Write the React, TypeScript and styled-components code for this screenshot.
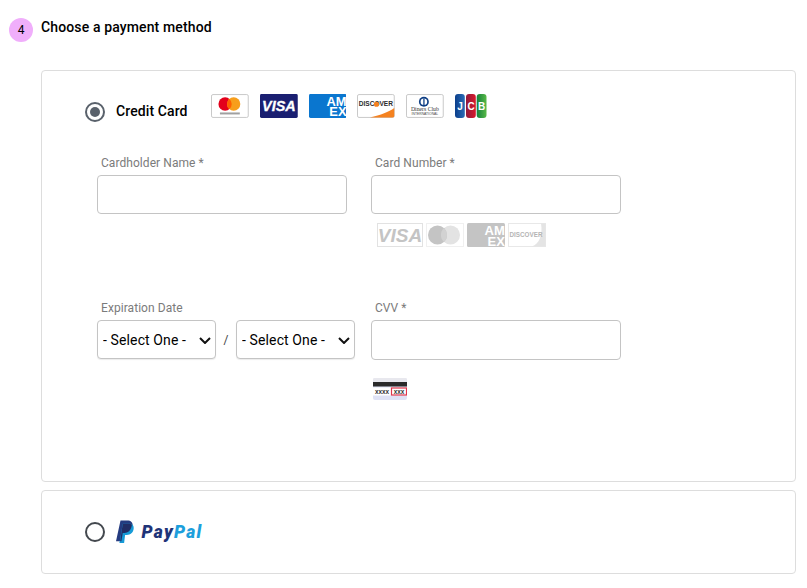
import styled, { createGlobalStyle } from "styled-components"

const GlobalStyle = createGlobalStyle`
  html, body {
    margin: 0;
    padding: 0;
    background: #fff;
    font-family: Roboto, "Liberation Sans", sans-serif;
    color: #000;
  }
`

const Page = styled.div`
  width: 807px;
  height: 588px;
  overflow: hidden;
  padding: 18px 11px 0 9px;
  box-sizing: border-box;
`

const Heading = styled.div`
  display: flex;
  align-items: flex-start;
  gap: 8px;
  height: 52px;
`

const StepBadge = styled.span`
  width: 24px;
  height: 24px;
  border-radius: 50%;
  background: #f0aefb;
  display: flex;
  align-items: center;
  justify-content: center;
  font-size: 12px;
`

const Title = styled.h2`
  margin: 1px 0 0;
  font-size: 14px;
  line-height: 16px;
  font-weight: 500;
  letter-spacing: 0.13px;
`

const Panel = styled.section<{ $height: number }>`
  margin-left: 32px;
  margin-bottom: 8px;
  height: ${(p) => p.$height}px;
  box-sizing: border-box;
  border: 1px solid #ddd;
  border-radius: 4px;
  padding-left: 43px;
`

const CreditRow = styled.div`
  display: flex;
  align-items: flex-start;
  gap: 11px;
  padding-top: 23px;
`

const PaypalRow = styled.div`
  display: flex;
  align-items: center;
  gap: 11px;
  height: 82px;
`

const Radio = styled.input.attrs({ type: "radio" })`
  appearance: none;
  margin: 0;
  width: 20px;
  height: 20px;
  box-sizing: border-box;
  border: 2px solid #43484e;
  border-radius: 50%;
  background: #fff;
  display: flex;
  align-items: center;
  justify-content: center;
  flex: none;

  &:checked {
    border-color: #59616b;
    border-width: 2.5px;
  }

  &:checked::before {
    content: "";
    width: 10px;
    height: 10px;
    border-radius: 50%;
    background: #59616b;
  }
`

const CreditRadio = styled(Radio)`
  margin-top: 8px;
`

const MethodName = styled.label`
  margin-top: 9px;
  margin-right: 13px;
  width: 71px;
  font-size: 14px;
  font-weight: 500;
  line-height: 16px;
  letter-spacing: 0.1px;
  white-space: nowrap;
`

const LogoRow = styled.div`
  display: flex;
  gap: 11px;

  svg {
    flex: none;
    width: 37.75px;
    height: 24px;
  }

  svg:last-child {
    width: 32px;
  }
`

const FormGrid = styled.div`
  display: grid;
  grid-template-columns: 250px 250px;
  column-gap: 24px;
  margin: 33px 0 0 12px;
`

const Field = styled.div`
  height: 145px;
`

const Label = styled.label`
  display: block;
  padding: 1px 0 0 4px;
  margin-bottom: 5px;
  font-size: 12px;
  line-height: 14px;
  letter-spacing: 0.06px;
  color: #7b7b7b;
`

const TextInput = styled.input<{ $tall?: boolean }>`
  display: block;
  width: 100%;
  height: ${(p) => (p.$tall ? 40 : 39)}px;
  box-sizing: border-box;
  border: 1px solid #c4c4c4;
  border-radius: 4px;
  background: #fff;
`

const SelectRow = styled.div`
  display: flex;
  align-items: center;
  width: 258px;
`

const SelectWrap = styled.div`
  position: relative;
  width: 119px;
  height: 39px;

  svg {
    position: absolute;
    top: 17px;
    right: 5px;
    pointer-events: none;
  }
`

const DateSelect = styled.select`
  appearance: none;
  display: block;
  width: 100%;
  height: 100%;
  box-sizing: border-box;
  border: 1px solid #c4c4c4;
  border-radius: 4px;
  background: #fff;
  color: #000;
  font-family: Roboto, "Liberation Sans", sans-serif;
  font-size: 14px;
  letter-spacing: 0.12px;
  padding: 0 0 0 5px;
  box-shadow: 0 1px 1px rgba(0, 0, 0, 0.08);
`

const Slash = styled.span`
  width: 20px;
  text-align: center;
  font-size: 12px;
  color: #444;
`

const GreyCards = styled.div`
  display: flex;
  align-items: center;
  gap: 3px;
  margin: 9px 0 0 6px;
`

const CvvHint = styled.div`
  margin: 18px 0 0 2px;
  line-height: 0;
`

const LogoFont = "'Liberation Sans', Arial, sans-serif"

const Mastercard = () => (
  <svg viewBox="0 0 38 24">
    <rect x="0.5" y="0.5" width="37" height="23" rx="1.5" fill="#fff" stroke="#c9c9c9" />
    <circle cx="14.2" cy="10" r="6.7" fill="#e3001b" />
    <circle cx="22.8" cy="10" r="6.7" fill="#f79e1b" />
    <path d="M18.500 4.900a6.700 6.700 0 0 1 0 10.200a6.700 6.700 0 0 1 0-10.200z" fill="#ff5f00" />
    <rect x="9" y="18.500" width="20" height="2" fill="#a0a0a0" />
  </svg>
)

const Visa = () => (
  <svg viewBox="0 0 38 24">
    <rect width="38" height="24" rx="1.5" fill="#1a1f71" />
    <text x="19" y="17" textAnchor="middle" fontFamily={LogoFont} fontSize="14.500" fontWeight="700" fontStyle="italic" fill="#fff" stroke="#fff" strokeWidth="0.3">
      VISA
    </text>
  </svg>
)

const AmexMark = ({ fill }: { fill: string }) => (
  <svg width="38" height="24" viewBox="0 0 38 24">
    <rect width="38" height="24" rx="1.5" fill={fill} />
    <text fontFamily={LogoFont} fontSize="13" fontWeight="700" fill="#fff">
      <tspan x="17.500" y="11.500">AM</tspan>
      <tspan x="20.500" y="22.500">EX</tspan>
    </text>
  </svg>
)

const Discover = () => (
  <svg viewBox="0 0 38 24">
    <rect x="0.5" y="0.5" width="37" height="23" rx="1.5" fill="#fff" stroke="#c9c9c9" />
    <path d="M13 23.500 C24 21 32 18 37.500 14 V22 a1.500 1.500 0 0 1-1.500 1.500z" fill="#f58220" />
    <text x="19" y="12.500" textAnchor="middle" fontFamily={LogoFont} fontSize="6.600" fontWeight="700" fill="#2b2b2b">
      DISCOVER
    </text>
    <circle cx="19.600" cy="10.200" r="2.600" fill="#f58220" />
  </svg>
)

const Diners = () => (
  <svg viewBox="0 0 38 24">
    <rect x="0.5" y="0.5" width="37" height="23" rx="1.5" fill="#fff" stroke="#c9c9c9" />
    <circle cx="18" cy="7.700" r="5" fill="#0f3f85" />
    <circle cx="18" cy="7.700" r="3.300" fill="#fff" />
    <rect x="17.400" y="4.400" width="1.300" height="6.600" fill="#0f3f85" />
    <text x="19" y="17" textAnchor="middle" fontFamily="'Liberation Serif', serif" fontSize="5.800" fill="#333">
      Diners Club
    </text>
    <text x="19" y="21.300" textAnchor="middle" fontFamily={LogoFont} fontSize="3.400" fill="#444">
      INTERNATIONAL
    </text>
  </svg>
)

const Jcb = () => (
  <svg viewBox="0 0 32 24">
    <defs>
      <linearGradient id="jcbBlue" x1="0" x2="1" y1="0" y2="0">
        <stop offset="0" stopColor="#0b3f8c" />
        <stop offset="1" stopColor="#2a6bb5" />
      </linearGradient>
      <linearGradient id="jcbRed" x1="0" x2="1" y1="0" y2="0">
        <stop offset="0" stopColor="#8f1a3c" />
        <stop offset="1" stopColor="#d8192b" />
      </linearGradient>
      <linearGradient id="jcbGreen" x1="0" x2="1" y1="0" y2="0">
        <stop offset="0" stopColor="#14803c" />
        <stop offset="1" stopColor="#58b947" />
      </linearGradient>
    </defs>
    <rect x="0" width="9.800" height="24" rx="3" fill="url(#jcbBlue)" />
    <rect x="11" width="9.800" height="24" rx="3" fill="url(#jcbRed)" />
    <rect x="21.700" width="9.800" height="24" rx="3" fill="url(#jcbGreen)" />
    <text fontFamily={LogoFont} fontSize="10" fontWeight="700" fill="#fff" textAnchor="middle">
      <tspan x="5" y="16">J</tspan>
      <tspan x="16" y="16">C</tspan>
      <tspan x="26.500" y="16">B</tspan>
    </text>
  </svg>
)

const GreyVisa = () => (
  <svg width="46" height="24" viewBox="0 0 46 24">
    <rect x="0.5" y="0.5" width="45" height="23" fill="#fff" stroke="#e2e2e2" />
    <text x="23" y="18.500" textAnchor="middle" fontFamily={LogoFont} fontSize="19" fontWeight="700" fontStyle="italic" fill="#c4c4c4">
      VISA
    </text>
  </svg>
)

const GreyMastercard = () => (
  <svg width="38" height="24" viewBox="0 0 38 24">
    <rect x="0.5" y="0.5" width="37" height="23" fill="#fff" stroke="#f0f0f0" />
    <circle cx="24.500" cy="12" r="9.500" fill="#e3e3e3" />
    <circle cx="11.500" cy="12" r="9.500" fill="#c4c4c4" />
    <path d="M18 5a9.500 9.500 0 0 1 0 14a9.500 9.500 0 0 1 0-14z" fill="#d2d2d2" />
  </svg>
)

const GreyDiscover = () => (
  <svg width="38" height="24" viewBox="0 0 38 24">
    <rect x="0.5" y="0.5" width="37" height="23" fill="#fff" stroke="#e8e8e8" />
    <path d="M24 23.500 C31 21 35 12 33 0.5 H37.500 V23.500z" fill="#e4e4e4" />
    <text x="18" y="14" textAnchor="middle" fontFamily={LogoFont} fontSize="6.300" fontWeight="700" fill="#b4b4b4">
      DISCOVER
    </text>
  </svg>
)

const CvvCard = () => (
  <svg width="34" height="22" viewBox="0 0 34 22">
    <rect width="34" height="22" rx="2" fill="#dfe2f5" />
    <rect width="34" height="4" rx="1.500" fill="#e8e8ee" />
    <rect y="4" width="34" height="4.500" fill="#2a2a2a" />
    <rect y="9.500" width="34" height="8" fill="#fff" />
    <rect x="18.500" y="10" width="15" height="7" fill="#fff" stroke="#e0354b" strokeWidth="1.200" />
    <text fontFamily={LogoFont} fontSize="6.400" fontWeight="700" fill="#333" textAnchor="middle">
      <tspan x="9" y="15.500">xxxx</tspan>
      <tspan x="26" y="15.500">xxx</tspan>
    </text>
  </svg>
)

const Paypal = () => (
  <svg width="90" height="24" viewBox="0 0 90 24">
    <g transform="translate(0 0.5) scale(0.9 0.96)">
      <path d="M5 0h7.500c4 0 6.500 2 6 6-.6 4.600-3.600 7-8 7H7.500L6 21.500H0z" fill="#253b80" />
      <path d="M7.500 3.500h7c3.600 0 5.700 1.900 5.100 5.400-.6 4-3.500 6.100-7.500 6.100h-2L9 23.500H3.800z" fill="#179bd7" />
      <path d="M7.500 3.500h6.500c1.400 0 2.800.3 3.700 1-.1 1.100-.4 2.300-.9 3.300-1.200 2.900-3.600 5.200-7.300 5.200H7.500L6 21.500H4.600z" fill="#222d65" />
    </g>
    <text x="25.500" y="18.300" fontFamily="Roboto, sans-serif" fontSize="17.500" fontWeight="900" fontStyle="italic" letterSpacing="1.300">
      <tspan fill="#1f3478">Pay</tspan>
      <tspan fill="#1d9fdc">Pal</tspan>
    </text>
  </svg>
)

const Chevron = () => (
  <svg width="12" height="7" viewBox="0 0 12 7">
    <path d="M1 1l5 5 5-5" fill="none" stroke="#111" strokeWidth="2" />
  </svg>
)

const DateDropdown = ({ options }: { options: string[] }) => (
  <SelectWrap>
    <DateSelect>
      {options.map((o) => (
        <option key={o}>{o}</option>
      ))}
    </DateSelect>
    <Chevron />
  </SelectWrap>
)

const MONTH_OPTIONS = ["- Select One -", "01", "02", "03"]
const YEAR_OPTIONS = ["- Select One -", "2025", "2026", "2027"]

export default function App() {
  return (
    <Page>
      <GlobalStyle />
      <Heading>
        <StepBadge>4</StepBadge>
        <Title>Choose a payment method</Title>
      </Heading>

      <Panel $height={412}>
        <CreditRow>
          <CreditRadio name="method" defaultChecked />
          <MethodName>Credit Card</MethodName>
          <LogoRow>
            <Mastercard />
            <Visa />
            <AmexMark fill="#0a76cf" />
            <Discover />
            <Diners />
            <Jcb />
          </LogoRow>
        </CreditRow>

        <FormGrid>
          <Field>
            <Label>Cardholder Name *</Label>
            <TextInput />
          </Field>
          <Field>
            <Label>Card Number *</Label>
            <TextInput />
            <GreyCards>
              <GreyVisa />
              <GreyMastercard />
              <AmexMark fill="#c4c4c4" />
              <GreyDiscover />
            </GreyCards>
          </Field>
          <Field>
            <Label>Expiration Date</Label>
            <SelectRow>
              <DateDropdown options={MONTH_OPTIONS} />
              <Slash>/</Slash>
              <DateDropdown options={YEAR_OPTIONS} />
            </SelectRow>
          </Field>
          <Field>
            <Label>CVV *</Label>
            <TextInput $tall />
            <CvvHint>
              <CvvCard />
            </CvvHint>
          </Field>
        </FormGrid>
      </Panel>

      <Panel $height={84}>
        <PaypalRow>
          <Radio name="method" />
          <Paypal />
        </PaypalRow>
      </Panel>
    </Page>
  )
}
